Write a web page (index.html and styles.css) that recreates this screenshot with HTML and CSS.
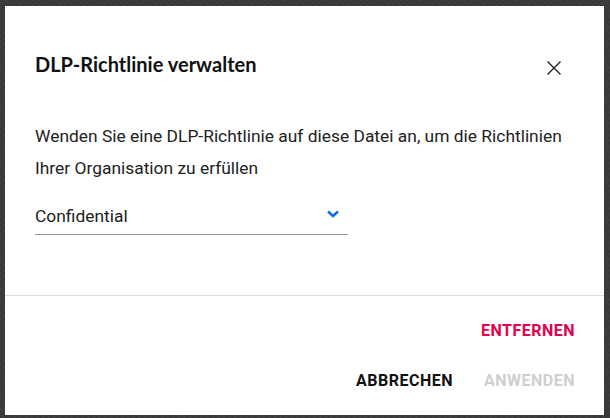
FILE: index.html
```html
<!DOCTYPE html>
<html lang="de">

<head>
    <meta charset="UTF-8">
    <meta name="viewport" content="width=device-width, initial-scale=1.0">
    <title>DLP-Richtlinie verwalten</title>
    <link rel="stylesheet" href="styles.css">
</head>

<body>
    <div class="backdrop">
        <div class="dialog">
            <div class="dialog-header">
                <h1>DLP-Richtlinie verwalten</h1>
                <button class="close" aria-label="Schließen">
                    <svg width="16" height="16" viewBox="0 0 16 16">
                        <path d="M1.5 1.5 L14.5 14.5 M14.5 1.5 L1.5 14.5" stroke="#222" stroke-width="1.4" fill="none"/>
                    </svg>
                </button>
            </div>

            <div class="dialog-body">
                <p class="desc">Wenden Sie eine DLP-Richtlinie auf diese Datei an, um die Richtlinien Ihrer Organisation zu erfüllen</p>
                <div class="select">
                    <span>Confidential</span>
                    <svg width="14" height="10" viewBox="0 0 14 10">
                        <path d="M2 2.5 L7 7 L12 2.5" stroke="#0a6ee6" stroke-width="2.6" fill="none"/>
                    </svg>
                </div>
            </div>

            <div class="dialog-footer">
                <button class="btn btn-danger">ENTFERNEN</button>
                <div class="actions">
                    <button class="btn">ABBRECHEN</button>
                    <button class="btn btn-disabled" disabled>ANWENDEN</button>
                </div>
            </div>
        </div>
    </div>
</body>

</html>
```

FILE: styles.css
```css
body {
    margin: 0;
    font-family: Roboto, "Liberation Sans", sans-serif;
    background-color: #3a3a3a;
}

.backdrop {
    width: 610px;
    height: 418px;
    padding: 6px 0 0 5px;
    box-sizing: border-box;
    background: repeating-linear-gradient(45deg, #383838 0 2px, #3e3e3e 2px 4px);
}

.dialog {
    width: 599px;
    height: 409px;
    background: white;
    display: flex;
    flex-direction: column;
}

.dialog-header {
    display: flex;
    justify-content: space-between;
    align-items: center;
    padding: 44px 42px 0 30px;
}

h1 {
    margin: 0;
    font-family: Lato, "Noto Sans", sans-serif;
    font-size: 20px;
    font-weight: 700;
    line-height: 28px;
    color: #111;
}

.close {
    border: none;
    background: none;
    padding: 0;
    display: flex;
    margin-top: 8px;
}

.dialog-body {
    flex: 1;
    padding: 0 30px;
}

.desc {
    margin: 42px 0 0;
    font-size: 17.4px;
    line-height: 32px;
    color: #222;
    max-width: 540px;
}

.select {
    margin-top: 20px;
    width: 313px;
    display: flex;
    justify-content: space-between;
    align-items: center;
    padding-bottom: 6px;
    border-bottom: 1px solid #999;
    font-size: 17.4px;
    line-height: 24px;
    color: #222;
}

.select svg {
    margin-right: 8px;
    margin-top: -4px;
}

.dialog-footer {
    border-top: 1px solid #ddd;
    padding: 25px 29px 24px 30px;
    display: flex;
    flex-direction: column;
    align-items: flex-end;
    gap: 30px;
}

.actions {
    display: flex;
    gap: 31px;
}

.btn {
    border: none;
    background: none;
    padding: 0;
    font-family: Roboto, "Liberation Sans", sans-serif;
    font-size: 16px;
    font-weight: 700;
    line-height: 20px;
    letter-spacing: 0.5px;
    color: #111;
    cursor: pointer;
}

.btn-danger {
    color: #e5004c;
}

.btn-disabled {
    color: #cfcfcf;
    cursor: default;
}
```
